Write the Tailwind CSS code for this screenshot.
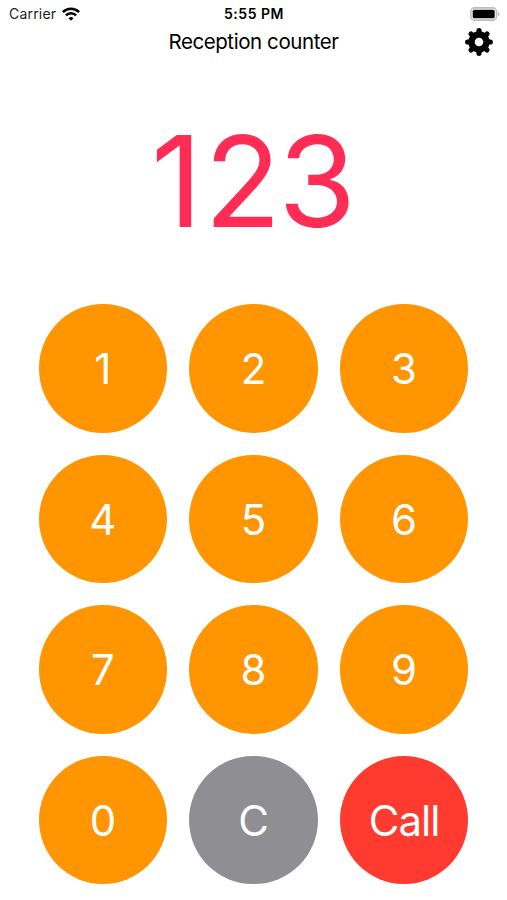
<!DOCTYPE html>
<html lang="en">
<head>
    <meta charset="UTF-8">
    <meta name="viewport" content="width=device-width, initial-scale=1.0">
    <title>Reception counter</title>
    <script src="https://cdn.jsdelivr.net/npm/@tailwindcss/browser@4"></script>
</head>
<body class="bg-white text-black font-['Inter',sans-serif] h-[900px] overflow-hidden">
    <!-- Status bar -->
    <div class="grid grid-cols-3 items-center h-[27px] pl-[9px] pr-[6px]">
        <div class="flex items-center gap-[6px] text-[#222]">
            <span class="text-[14px] leading-none tracking-[0.2px] pt-px">Carrier</span>
            <svg class="w-[18px] h-[14px] text-black" viewBox="0 0 18 14" fill="none" stroke="currentColor" stroke-width="2.6">
                <path d="M0.9 5.1a11.5 11.5 0 0 1 16.2 0" />
                <path d="M3.9 8.3a7.2 7.2 0 0 1 10.2 0" />
                <path d="M9 13.8l-2.5-2.6a3.6 3.6 0 0 1 5 0z" fill="currentColor" stroke="none" />
            </svg>
        </div>
        <div class="text-center text-[14px] leading-none font-semibold tracking-[0.5px] pt-px pr-[2px]">5:55 PM</div>
        <div class="flex justify-end">
            <svg class="w-[31px] h-[14px]" viewBox="0 0 31 14">
                <rect x="0.9" y="0.9" width="25.6" height="12.2" rx="3.6" fill="#fff" stroke="#bdbdbd" stroke-width="1.6" />
                <rect x="2.7" y="2.7" width="22" height="8.6" rx="1.6" fill="#000" />
                <path d="M28.2 4.8c1.6.5 1.6 3.9 0 4.4z" fill="#aaa" />
            </svg>
        </div>
    </div>

    <!-- Title -->
    <div class="grid grid-cols-[1fr_auto_1fr] items-center h-[30px] pr-[14px] pl-[14px]">
        <div></div>
        <h1 class="text-[20.5px] leading-none tracking-[-0.42px]">Reception counter</h1>
        <button class="justify-self-end" aria-label="Settings">
            <svg class="block w-[28px] h-[28px]" viewBox="-14 -14 28 28" fill="none" stroke="#000">
                <circle r="7.5" stroke-width="6.4" />
                <path d="M0-11.3V-9M0 11.3V9M-11.3 0H-9M11.3 0H9M-8-8L-6.5-6.5M8 8L6.5 6.5M-8 8L-6.5 6.5M8-8L6.5-6.5" stroke-width="5.2" stroke-linecap="round" />
            </svg>
        </button>
    </div>

    <!-- Current number -->
    <div class="flex justify-center items-center h-[247px]">
        <span class="text-[126px] leading-none text-[#ff2d55]"><span class="tracking-[2px]">1</span><span class="tracking-[-3px]">2</span>3</span>
    </div>

    <!-- Keypad -->
    <div class="grid grid-cols-[repeat(3,128.6px)] auto-rows-[128.6px] gap-[22px] justify-center text-[42px] leading-none font-[370] text-white">
        <button class="rounded-full bg-[#ff9500] pt-[2px]">1</button>
        <button class="rounded-full bg-[#ff9500] pt-[2px]">2</button>
        <button class="rounded-full bg-[#ff9500] pt-[2px]">3</button>
        <button class="rounded-full bg-[#ff9500] pt-[2px]">4</button>
        <button class="rounded-full bg-[#ff9500] pt-[2px]">5</button>
        <button class="rounded-full bg-[#ff9500] pt-[2px]">6</button>
        <button class="rounded-full bg-[#ff9500] pt-[2px]">7</button>
        <button class="rounded-full bg-[#ff9500] pt-[2px]">8</button>
        <button class="rounded-full bg-[#ff9500] pt-[2px]">9</button>
        <button class="rounded-full bg-[#ff9500] pt-[2px]">0</button>
        <button class="rounded-full bg-[#8e8e93] pt-[2px]">C</button>
        <button class="rounded-full bg-[#ff3b30] pt-[2px] tracking-[-1px]">Call</button>
    </div>
</body>
</html>
